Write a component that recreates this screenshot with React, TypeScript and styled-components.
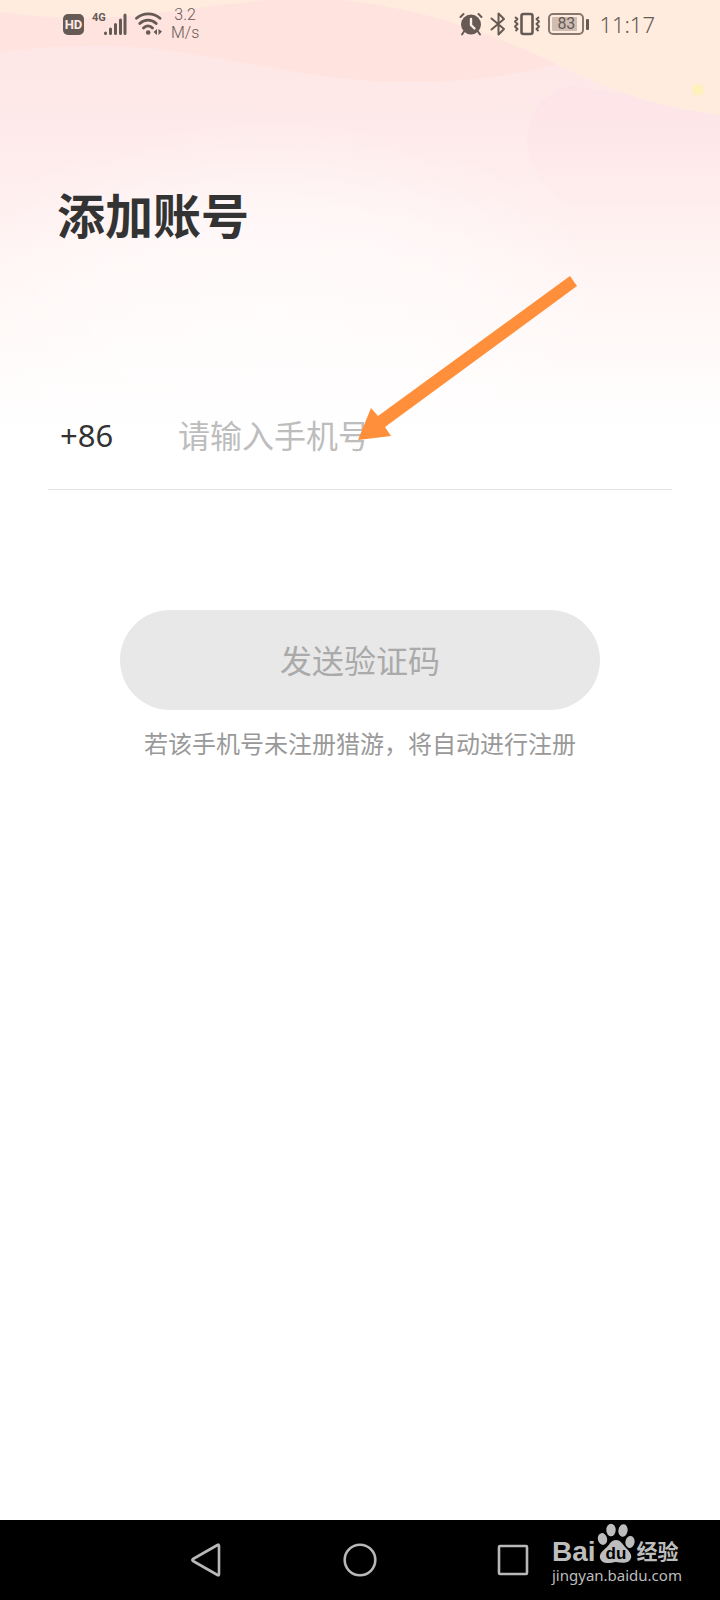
import React from 'react';
import styled, { createGlobalStyle } from 'styled-components';

const GlobalStyle = createGlobalStyle`
  * { box-sizing: border-box; }
  body {
    margin: 0;
    background: #fff;
    font-family: 'Noto Sans', 'Noto Sans CJK SC', sans-serif;
  }
`;

const ink = '#665a54';

const Page = styled.div`
  position: relative;
  display: flex;
  flex-direction: column;
  min-height: 100vh;
  background: #fff;
`;

const Backdrop = styled.svg`
  position: absolute;
  inset: 0 0 auto;
  width: 100%;
  height: 430px;
`;

const StatusBar = styled.header`
  position: relative;
  display: flex;
  justify-content: space-between;
  height: 48px;
  padding: 0 65px 0 63px;
  color: ${ink};
`;

const StatusGroup = styled.div<{ $gap: number }>`
  display: flex;
  align-items: center;
  gap: ${({ $gap }) => $gap}px;
`;

const HdBadge = styled.span`
  width: 21px;
  height: 21px;
  border-radius: 5px;
  background: ${ink};
  color: #ffeae4;
  font: 700 13px/21px Roboto, sans-serif;
  text-align: center;
`;

const Signal = styled.div`
  display: flex;
`;

const Network = styled.span`
  font: 700 11px/12px Roboto, sans-serif;
  width: 11px;
  white-space: nowrap;
`;

const Speed = styled.span`
  font: 300 16px/18px Roboto, sans-serif;
  text-align: center;
`;

const BatteryShell = styled.div`
  display: flex;
  align-items: center;
  gap: 2px;
  &::after {
    content: '';
    width: 3px;
    height: 11px;
    border-radius: 1px;
    background: ${ink};
  }
`;

const BatteryCell = styled.span`
  width: 36px;
  height: 22px;
  padding: 2px;
  border: 2px solid #86786f;
  border-radius: 5px;
`;

const BatteryLevel = styled.span`
  display: block;
  height: 14px;
  border-radius: 1px;
  background: linear-gradient(90deg, #cfbdb3 88%, transparent 88%);
  font: 400 16px/14px Roboto, sans-serif;
  text-align: center;
`;

const Clock = styled.time`
  margin-left: 3px;
  font-size: 22px;
  font-weight: 300;
  line-height: 30px;
`;

const Main = styled.main`
  position: relative;
  flex: 1;
  padding: 132px 48px 0;
`;

const Title = styled.h1`
  margin: 0;
  padding-left: 9px;
  font-size: 48px;
  line-height: 72px;
  font-weight: 700;
  color: #333;
`;

const Form = styled.form`
  display: flex;
  flex-direction: column;
  margin-top: 132px;
`;

const PhoneRow = styled.div`
  position: relative;
  display: flex;
  align-items: center;
  height: 106px;
  padding: 0 0 3px 12px;
  border-bottom: 1px solid #e5e5e5;
  font-size: 32px;
  color: #333;
`;

const Prefix = styled.label`
  width: 118px;
  font-size: 31px;
`;

const PhoneInput = styled.input`
  flex: 1;
  min-width: 0;
  padding: 0;
  border: 0;
  outline: 0;
  background: transparent;
  font: inherit;
  color: inherit;
  &::placeholder {
    color: #bdbdbd;
    opacity: 1;
  }
`;

const Pointer = styled.svg`
  position: absolute;
  left: calc(50% - 2px);
  bottom: 48px;
  width: 220px;
  height: 166px;
  pointer-events: none;
`;

const SubmitButton = styled.button`
  height: 100px;
  margin: 120px 72px 0;
  padding: 0 0 3px;
  border: 0;
  border-radius: 50px;
  background: #e8e8e8;
  color: #aaa;
  font: inherit;
  font-size: 32px;
`;

const Note = styled.p`
  margin: 16px 0 0;
  font-size: 24px;
  line-height: 36px;
  text-align: center;
  color: #999;
`;

const NavBar = styled.nav`
  position: relative;
  display: flex;
  height: 80px;
  padding: 0 131px;
  background: #000;
`;

const NavButton = styled.button`
  flex: 1;
  display: flex;
  align-items: center;
  justify-content: center;
  padding: 0;
  border: 0;
  background: none;
`;

const Watermark = styled.div`
  position: absolute;
  right: 38px;
  bottom: 14px;
  width: 130px;
  color: #bdbdbd;
`;

const Brand = styled.div`
  display: flex;
  align-items: flex-end;
  height: 42px;
`;

const Latin = styled.span`
  font: 700 28px/24px 'Liberation Sans', sans-serif;
`;

const Paw = styled.svg`
  width: 38px;
  height: 42px;
  margin: 0 2px 0 1px;
`;

const Han = styled.span`
  font: 700 21px/28px 'Noto Sans CJK SC', sans-serif;
`;

const Site = styled.div`
  font-size: 15px;
  line-height: 22px;
`;

const navIcon = { fill: 'none', stroke: '#b8b8b8', strokeWidth: 2.6, strokeLinejoin: 'round' as const };

export default function App() {
  return (
    <Page>
      <GlobalStyle />
      <Backdrop viewBox="0 0 720 430" preserveAspectRatio="none" aria-hidden="true">
        <defs>
          <linearGradient id="base" x1="0" y1="0" x2="0" y2="1">
            <stop offset="0" stopColor="#fee5e4" />
            <stop offset=".3" stopColor="#feeaea" />
            <stop offset=".5" stopColor="#fff0f0" />
            <stop offset=".75" stopColor="#fff8f7" />
            <stop offset="1" stopColor="#fff" />
          </linearGradient>
          <radialGradient id="glow">
            <stop offset="0" stopColor="#fff" stopOpacity=".6" />
            <stop offset=".5" stopColor="#fff" stopOpacity=".45" />
            <stop offset="1" stopColor="#fff" stopOpacity="0" />
          </radialGradient>
          <linearGradient id="bubble" x1="0" y1="0" x2="0" y2="1">
            <stop offset="0" stopColor="#fde0e8" stopOpacity=".5" />
            <stop offset="1" stopColor="#fde0e8" stopOpacity="0" />
          </linearGradient>
          <radialGradient id="spark">
            <stop offset="0" stopColor="#fff2b8" />
            <stop offset=".5" stopColor="#fff0b8" />
            <stop offset="1" stopColor="#ffeed0" stopOpacity="0" />
          </radialGradient>
        </defs>
        <path d="M0 0H720V430H0Z" fill="url(#base)" />
        <ellipse cx="270" cy="310" rx="340" ry="190" fill="url(#glow)" />
        <path d="M0 0H720V20C630 30 570 82 410 82C290 82 210 46 100 46C60 46 30 48 0 52Z" fill="#ffe3df" />
        <path d="M0 0H270C210 4 150 18 85 18C50 18 30 16 0 12Z" fill="#ffecdf" />
        <path d="M571 86C538 92 527 120 527 140C530 180 560 215 620 226H720V113L640 96Z" fill="url(#bubble)" />
        <path d="M340 0H720V115C640 106 590 80 535 54C480 30 420 8 340 0Z" fill="#ffecdf" />
        <circle cx="698" cy="90" r="8" fill="url(#spark)" />
      </Backdrop>

      <StatusBar>
        <StatusGroup $gap={8}>
          <HdBadge>HD</HdBadge>
          <Signal>
            <Network>4G</Network>
            <svg width="24" height="24" viewBox="0 0 24 24" stroke={ink} strokeWidth="3" strokeLinecap="round">
              <path d="M2.5 21.5V21M7.5 21.5V17M12.5 21.5V12.500M17.500 21.500V8M22 21.500V3" />
            </svg>
          </Signal>
          <svg width="28" height="24" viewBox="0 0 28 24" fill="none" stroke={ink} strokeWidth="2.8" strokeLinecap="round">
            <path d="M1.500 6.200C8 .400 18.500 .400 25 6.200M4.800 11.500C9.500 7 16.500 7 21.200 11.500M8.500 16C11 13.200 15 13.200 17.500 16" />
            <circle cx="13.200" cy="20.500" r="2.300" fill={ink} stroke="none" />
            <path d="M22 17V23L18.500 20ZM23.500 17V23L27 19.500Z" fill={ink} stroke="none" />
          </svg>
          <Speed>3.2<br />M/s</Speed>
        </StatusGroup>
        <StatusGroup $gap={7}>
          <svg width="24" height="24" viewBox="0 0 24 24" fill="none" stroke={ink} strokeLinecap="round">
            <circle cx="12" cy="12.500" r="10" fill={ink} stroke="none" />
            <path d="M1.500 5L4.500 2M22.500 5L19.500 2M5 19.500L3 22.500M19 19.500L21 22.500" strokeWidth="2" />
            <path d="M12 7V13L15.500 16.500" stroke="#ffece4" strokeWidth="2.400" />
          </svg>
          <svg width="16" height="24" viewBox="0 0 16 24" fill="none" stroke={ink} strokeWidth="2" strokeLinejoin="round" strokeLinecap="round">
            <path d="M1.500 6.500L14 17L8.500 22.500V1.500L14 7L1.500 17.500" />
          </svg>
          <svg width="28" height="24" viewBox="0 0 28 24" fill="none" stroke={ink} strokeWidth="2" strokeLinejoin="round">
            <rect x="8.500" y="2" width="11" height="20" rx="2" strokeWidth="2.600" />
            <path d="M2 5L4.500 7L2 9.500L4.500 12L2 14.500L4.500 17L2.500 19M26 5L23.500 7L26 9.500L23.500 12L26 14.500L23.500 17L25.500 19" />
          </svg>
          <BatteryShell>
            <BatteryCell><BatteryLevel>83</BatteryLevel></BatteryCell>
          </BatteryShell>
          <Clock>11:17</Clock>
        </StatusGroup>
      </StatusBar>

      <Main>
        <Title>添加账号</Title>
        <Form onSubmit={(e) => e.preventDefault()}>
          <PhoneRow>
            <Prefix htmlFor="phone">+86</Prefix>
            <PhoneInput id="phone" type="tel" placeholder="请输入手机号" />
            <Pointer viewBox="0 0 220 166" aria-hidden="true">
              <path d="M0 165L13 133L20 141L212 1L219 11L27 152L33 161Z" fill="#ff8f3a" />
            </Pointer>
          </PhoneRow>
          <SubmitButton type="submit">发送验证码</SubmitButton>
        </Form>
        <Note>若该手机号未注册猎游，将自动进行注册</Note>
      </Main>

      <NavBar>
        <NavButton aria-label="Back">
          <svg width="34" height="36" viewBox="0 0 34 36" {...navIcon}>
            <path d="M27.500 3Q29 2 29 4V32Q29 34 27.500 33L3 19Q1.500 18 3 17Z" />
          </svg>
        </NavButton>
        <NavButton aria-label="Home">
          <svg width="36" height="36" viewBox="0 0 36 36" {...navIcon}>
            <circle cx="18" cy="18" r="15.300" />
          </svg>
        </NavButton>
        <NavButton aria-label="Recent apps">
          <svg width="34" height="34" viewBox="0 0 34 34" {...navIcon}>
            <rect x="3" y="3" width="28" height="28" rx="1" />
          </svg>
        </NavButton>
        <Watermark>
          <Brand>
            <Latin>Bai</Latin>
            <Paw viewBox="0 0 38 42" fill="currentColor">
              <ellipse cx="5.500" cy="17" rx="4.600" ry="6" transform="rotate(-12 5.500 17)" />
              <ellipse cx="14" cy="8" rx="4.700" ry="6.300" />
              <ellipse cx="26" cy="8.500" rx="4.600" ry="6.300" transform="rotate(10 26 8.500)" />
              <ellipse cx="33" cy="20" rx="4.600" ry="6" transform="rotate(10 33 20)" />
              <path d="M19 18C24 18 26 23 29 26C33 30 35 33 34 36C32 42 25 41 19 40C13 41 5 43 3 36C2 31 7 28 10 25C13 22 14 18 19 18Z" />
              <text x="19" y="37" textAnchor="middle" fill="#000" fontFamily="Liberation Sans" fontWeight="700" fontSize="17">du</text>
            </Paw>
            <Han>经验</Han>
          </Brand>
          <Site>jingyan.baidu.com</Site>
        </Watermark>
      </NavBar>
    </Page>
  );
}
